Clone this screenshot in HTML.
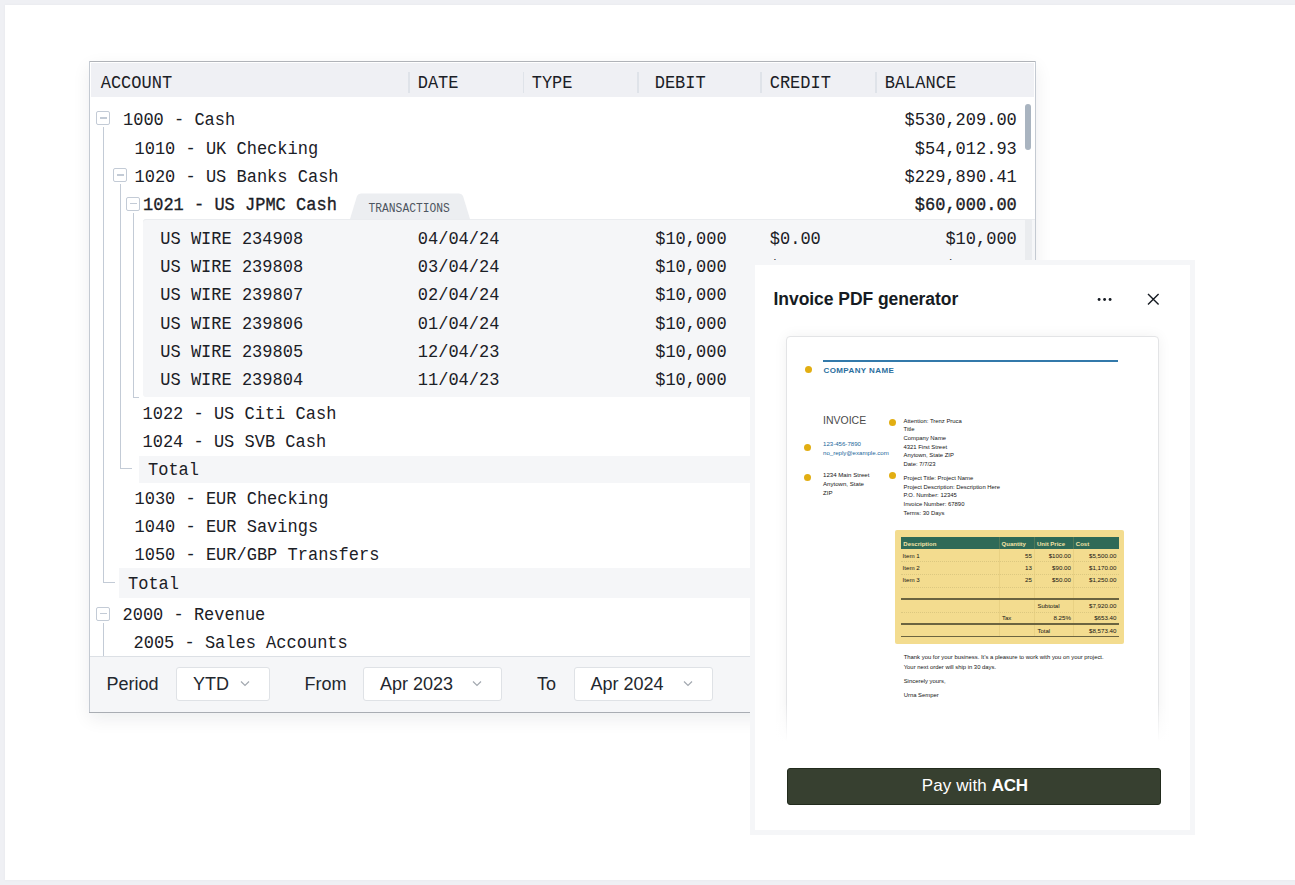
<!DOCTYPE html>
<html><head><meta charset="utf-8"><style>
html,body{margin:0;padding:0;width:1295px;height:885px;overflow:hidden;background:#eff0f4;position:relative}
.m{position:absolute;font-family:"Liberation Mono", monospace;line-height:20px;white-space:pre}
.s{position:absolute;font-family:"Liberation Sans", sans-serif;line-height:20px;white-space:pre}
.t{position:absolute;font-family:"Liberation Sans", sans-serif;line-height:10px;white-space:pre}
</style></head><body>
<div style="position:absolute;left:5px;top:5px;right:0;bottom:5px;background:#fff;box-shadow:0 0 3px rgba(0,0,0,0.04)"></div>
<div style="position:absolute;left:89px;top:61px;width:947px;height:652px;box-shadow:0 6px 18px rgba(20,30,40,0.075);background:#fff;border-radius:2px"></div>
<div style="position:absolute;left:91px;top:63px;width:943px;height:34px;background:#eff0f4"></div>
<div style="position:absolute;left:89px;top:61px;width:947px;height:1px;background:#b0b3b8"></div>
<div style="position:absolute;left:89px;top:61px;width:1px;height:652px;background:#c4cad2"></div>
<div style="position:absolute;left:1035px;top:61px;width:1px;height:652px;background:#c4cad2"></div>
<div style="position:absolute;left:408.2px;top:72px;width:1.6999999999999886px;height:21px;background:#dfe3e9"></div>
<div style="position:absolute;left:522.7px;top:72px;width:1.7000000000000455px;height:21px;background:#dfe3e9"></div>
<div style="position:absolute;left:637.3px;top:72px;width:1.7000000000000455px;height:21px;background:#dfe3e9"></div>
<div style="position:absolute;left:760.3px;top:72px;width:1.7000000000000455px;height:21px;background:#dfe3e9"></div>
<div style="position:absolute;left:875.2px;top:72px;width:1.7000000000000455px;height:21px;background:#dfe3e9"></div>
<div class="m" style="left:100.70px;top:74.08px;font-size:17px;color:#1b2026;transform:scaleY(1.08);transform-origin:0 14.52px;">ACCOUNT</div>
<div class="m" style="left:417.70px;top:74.08px;font-size:17px;color:#1b2026;transform:scaleY(1.08);transform-origin:0 14.52px;">DATE</div>
<div class="m" style="left:531.70px;top:74.08px;font-size:17px;color:#1b2026;transform:scaleY(1.08);transform-origin:0 14.52px;">TYPE</div>
<div class="m" style="left:654.70px;top:74.08px;font-size:17px;color:#1b2026;transform:scaleY(1.08);transform-origin:0 14.52px;">DEBIT</div>
<div class="m" style="left:769.70px;top:74.08px;font-size:17px;color:#1b2026;transform:scaleY(1.08);transform-origin:0 14.52px;">CREDIT</div>
<div class="m" style="left:884.70px;top:74.08px;font-size:17px;color:#1b2026;transform:scaleY(1.08);transform-origin:0 14.52px;">BALANCE</div>
<div style="position:absolute;left:143px;top:219px;width:892px;height:178px;background:#f5f6f8;border-radius:3px 0 0 3px;box-shadow:inset 0 1px 0 #eaecef"></div>
<svg style="position:absolute;left:348px;top:192px" width="124" height="28" viewBox="0 0 124 28"><path d="M2 27 L9 4 Q10 1.5 13 1.5 L111 1.5 Q114 1.5 115 4 L122 27 Z" fill="#eceef1"/></svg>
<div class="m" style="left:368.50px;top:198.59px;font-size:11.3px;color:#4d5560;transform:scaleY(1.06);transform-origin:0 13.01px;">TRANSACTIONS</div>
<div style="position:absolute;left:1025px;top:219px;width:7px;height:178px;background:#eaecef"></div>
<div style="position:absolute;left:1025px;top:104px;width:6px;height:46px;background:#a9b4c0;border-radius:3px"></div>
<div style="position:absolute;left:139px;top:456px;width:621px;height:27px;background:#f5f6f8"></div>
<div style="position:absolute;left:119px;top:568px;width:641px;height:29.5px;background:#f5f6f8"></div>
<div style="position:absolute;left:96px;top:111px;width:12px;height:12px;border:1px solid #c3cbd6;border-radius:2px;background:#fff"><div style="position:absolute;left:2.5px;top:5.3px;width:7px;height:1.3px;background:#c3cbd6"></div></div>
<div style="position:absolute;left:103px;top:127px;width:1px;height:455.5px;background:#c3cbd6"></div>
<div style="position:absolute;left:103px;top:582px;width:12px;height:1px;background:#c3cbd6"></div>
<div style="position:absolute;left:113px;top:168px;width:12px;height:12px;border:1px solid #c3cbd6;border-radius:2px;background:#fff"><div style="position:absolute;left:2.5px;top:5.3px;width:7px;height:1.3px;background:#c3cbd6"></div></div>
<div style="position:absolute;left:120px;top:184px;width:1px;height:285px;background:#c3cbd6"></div>
<div style="position:absolute;left:120px;top:468px;width:12px;height:1px;background:#c3cbd6"></div>
<div style="position:absolute;left:126px;top:196.8px;width:12px;height:12px;border:1px solid #c3cbd6;border-radius:2px;background:#fff"><div style="position:absolute;left:2.5px;top:5.3px;width:7px;height:1.3px;background:#c3cbd6"></div></div>
<div style="position:absolute;left:133px;top:213px;width:1px;height:184px;background:#c3cbd6"></div>
<div style="position:absolute;left:133px;top:396.5px;width:6px;height:1.0px;background:#c3cbd6"></div>
<div style="position:absolute;left:96px;top:606.5px;width:12px;height:12px;border:1px solid #c3cbd6;border-radius:2px;background:#fff"><div style="position:absolute;left:2.5px;top:5.3px;width:7px;height:1.3px;background:#c3cbd6"></div></div>
<div style="position:absolute;left:103px;top:623px;width:1px;height:33px;background:#c3cbd6"></div>
<div class="m" style="left:123.00px;top:111.18px;font-size:17px;color:#1b2026;transform:scaleY(1.08);transform-origin:0 14.52px;">1000 - Cash</div>
<div class="m" style="right:278.20px;top:111.18px;font-size:17px;color:#1b2026;transform:scaleY(1.08);transform-origin:0 14.52px;">$530,209.00</div>
<div class="m" style="left:134.50px;top:139.58px;font-size:17px;color:#1b2026;transform:scaleY(1.08);transform-origin:0 14.52px;">1010 - UK Checking</div>
<div class="m" style="right:278.20px;top:139.58px;font-size:17px;color:#1b2026;transform:scaleY(1.08);transform-origin:0 14.52px;">$54,012.93</div>
<div class="m" style="left:134.50px;top:167.78px;font-size:17px;color:#1b2026;transform:scaleY(1.08);transform-origin:0 14.52px;">1020 - US Banks Cash</div>
<div class="m" style="right:278.20px;top:167.78px;font-size:17px;color:#1b2026;transform:scaleY(1.08);transform-origin:0 14.52px;">$229,890.41</div>
<div class="m" style="left:143.00px;top:195.68px;font-size:17px;-webkit-text-stroke:0.3px #1b2026;color:#1b2026;transform:scaleY(1.08);transform-origin:0 14.52px;">1021 - US JPMC Cash</div>
<div class="m" style="right:278.20px;top:195.68px;font-size:17px;-webkit-text-stroke:0.3px #1b2026;color:#1b2026;transform:scaleY(1.08);transform-origin:0 14.52px;">$60,000.00</div>
<div class="m" style="left:142.50px;top:405.18px;font-size:17px;color:#1b2026;transform:scaleY(1.08);transform-origin:0 14.52px;">1022 - US Citi Cash</div>
<div class="m" style="left:142.50px;top:433.28px;font-size:17px;color:#1b2026;transform:scaleY(1.08);transform-origin:0 14.52px;">1024 - US SVB Cash</div>
<div class="m" style="left:148.00px;top:461.48px;font-size:17px;color:#1b2026;transform:scaleY(1.08);transform-origin:0 14.52px;">Total</div>
<div class="m" style="left:134.50px;top:489.68px;font-size:17px;color:#1b2026;transform:scaleY(1.08);transform-origin:0 14.52px;">1030 - EUR Checking</div>
<div class="m" style="left:134.50px;top:518.38px;font-size:17px;color:#1b2026;transform:scaleY(1.08);transform-origin:0 14.52px;">1040 - EUR Savings</div>
<div class="m" style="left:134.50px;top:546.28px;font-size:17px;color:#1b2026;transform:scaleY(1.08);transform-origin:0 14.52px;">1050 - EUR/GBP Transfers</div>
<div class="m" style="left:128.00px;top:574.68px;font-size:17px;color:#1b2026;transform:scaleY(1.08);transform-origin:0 14.52px;">Total</div>
<div class="m" style="left:122.50px;top:605.98px;font-size:17px;color:#1b2026;transform:scaleY(1.08);transform-origin:0 14.52px;">2000 - Revenue</div>
<div class="m" style="left:133.50px;top:634.08px;font-size:17px;color:#1b2026;transform:scaleY(1.08);transform-origin:0 14.52px;">2005 - Sales Accounts</div>
<div class="m" style="left:160.30px;top:229.78px;font-size:17px;color:#1b2026;transform:scaleY(1.08);transform-origin:0 14.52px;">US WIRE 234908</div>
<div class="m" style="left:417.80px;top:229.78px;font-size:17px;color:#1b2026;transform:scaleY(1.08);transform-origin:0 14.52px;">04/04/24</div>
<div class="m" style="left:655.20px;top:229.78px;font-size:17px;color:#1b2026;transform:scaleY(1.08);transform-origin:0 14.52px;">$10,000</div>
<div class="m" style="left:769.80px;top:229.78px;font-size:17px;color:#1b2026;transform:scaleY(1.08);transform-origin:0 14.52px;">$0.00</div>
<div class="m" style="right:278.20px;top:229.78px;font-size:17px;color:#1b2026;transform:scaleY(1.08);transform-origin:0 14.52px;">$10,000</div>
<div class="m" style="left:160.30px;top:258.08px;font-size:17px;color:#1b2026;transform:scaleY(1.08);transform-origin:0 14.52px;">US WIRE 239808</div>
<div class="m" style="left:417.80px;top:258.08px;font-size:17px;color:#1b2026;transform:scaleY(1.08);transform-origin:0 14.52px;">03/04/24</div>
<div class="m" style="left:655.20px;top:258.08px;font-size:17px;color:#1b2026;transform:scaleY(1.08);transform-origin:0 14.52px;">$10,000</div>
<div class="m" style="left:769.80px;top:258.08px;font-size:17px;color:#1b2026;transform:scaleY(1.08);transform-origin:0 14.52px;">$0.00</div>
<div class="m" style="right:278.20px;top:258.08px;font-size:17px;color:#1b2026;transform:scaleY(1.08);transform-origin:0 14.52px;">$10,000</div>
<div class="m" style="left:160.30px;top:286.38px;font-size:17px;color:#1b2026;transform:scaleY(1.08);transform-origin:0 14.52px;">US WIRE 239807</div>
<div class="m" style="left:417.80px;top:286.38px;font-size:17px;color:#1b2026;transform:scaleY(1.08);transform-origin:0 14.52px;">02/04/24</div>
<div class="m" style="left:655.20px;top:286.38px;font-size:17px;color:#1b2026;transform:scaleY(1.08);transform-origin:0 14.52px;">$10,000</div>
<div class="m" style="left:769.80px;top:286.38px;font-size:17px;color:#1b2026;transform:scaleY(1.08);transform-origin:0 14.52px;">$0.00</div>
<div class="m" style="right:278.20px;top:286.38px;font-size:17px;color:#1b2026;transform:scaleY(1.08);transform-origin:0 14.52px;">$10,000</div>
<div class="m" style="left:160.30px;top:314.68px;font-size:17px;color:#1b2026;transform:scaleY(1.08);transform-origin:0 14.52px;">US WIRE 239806</div>
<div class="m" style="left:417.80px;top:314.68px;font-size:17px;color:#1b2026;transform:scaleY(1.08);transform-origin:0 14.52px;">01/04/24</div>
<div class="m" style="left:655.20px;top:314.68px;font-size:17px;color:#1b2026;transform:scaleY(1.08);transform-origin:0 14.52px;">$10,000</div>
<div class="m" style="left:769.80px;top:314.68px;font-size:17px;color:#1b2026;transform:scaleY(1.08);transform-origin:0 14.52px;">$0.00</div>
<div class="m" style="right:278.20px;top:314.68px;font-size:17px;color:#1b2026;transform:scaleY(1.08);transform-origin:0 14.52px;">$10,000</div>
<div class="m" style="left:160.30px;top:342.98px;font-size:17px;color:#1b2026;transform:scaleY(1.08);transform-origin:0 14.52px;">US WIRE 239805</div>
<div class="m" style="left:417.80px;top:342.98px;font-size:17px;color:#1b2026;transform:scaleY(1.08);transform-origin:0 14.52px;">12/04/23</div>
<div class="m" style="left:655.20px;top:342.98px;font-size:17px;color:#1b2026;transform:scaleY(1.08);transform-origin:0 14.52px;">$10,000</div>
<div class="m" style="left:769.80px;top:342.98px;font-size:17px;color:#1b2026;transform:scaleY(1.08);transform-origin:0 14.52px;">$0.00</div>
<div class="m" style="right:278.20px;top:342.98px;font-size:17px;color:#1b2026;transform:scaleY(1.08);transform-origin:0 14.52px;">$10,000</div>
<div class="m" style="left:160.30px;top:371.28px;font-size:17px;color:#1b2026;transform:scaleY(1.08);transform-origin:0 14.52px;">US WIRE 239804</div>
<div class="m" style="left:417.80px;top:371.28px;font-size:17px;color:#1b2026;transform:scaleY(1.08);transform-origin:0 14.52px;">11/04/23</div>
<div class="m" style="left:655.20px;top:371.28px;font-size:17px;color:#1b2026;transform:scaleY(1.08);transform-origin:0 14.52px;">$10,000</div>
<div class="m" style="left:769.80px;top:371.28px;font-size:17px;color:#1b2026;transform:scaleY(1.08);transform-origin:0 14.52px;">$0.00</div>
<div class="m" style="right:278.20px;top:371.28px;font-size:17px;color:#1b2026;transform:scaleY(1.08);transform-origin:0 14.52px;">$10,000</div>
<div style="position:absolute;left:90px;top:656px;width:945px;height:1px;background:#dce0e5"></div>
<div style="position:absolute;left:90px;top:657px;width:945px;height:55px;background:#f5f6f8"></div>
<div style="position:absolute;left:89px;top:712px;width:947px;height:1px;background:#a9adb3"></div>
<div class="s" style="left:106.5px;top:673.56px;font-size:18px;color:#22272e;font-weight:normal;">Period</div>
<div style="position:absolute;left:176px;top:666.8px;width:92px;height:32.2px;background:#fff;border:1px solid #dfe2e6;border-radius:3px"></div>
<div class="s" style="left:193px;top:673.56px;font-size:18px;color:#22272e;font-weight:normal;">YTD</div>
<svg style="position:absolute;left:239.5px;top:680px" width="10" height="7" viewBox="0 0 10 7"><path d="M1 1.5 L5 5.5 L9 1.5" fill="none" stroke="#a3a9b0" stroke-width="1.2"/></svg>
<div class="s" style="left:304.5px;top:673.56px;font-size:18px;color:#22272e;font-weight:normal;">From</div>
<div style="position:absolute;left:363px;top:666.8px;width:137px;height:32.2px;background:#fff;border:1px solid #dfe2e6;border-radius:3px"></div>
<div class="s" style="left:380px;top:673.56px;font-size:18px;color:#22272e;font-weight:normal;">Apr 2023</div>
<svg style="position:absolute;left:471.5px;top:680px" width="10" height="7" viewBox="0 0 10 7"><path d="M1 1.5 L5 5.5 L9 1.5" fill="none" stroke="#a3a9b0" stroke-width="1.2"/></svg>
<div class="s" style="left:537px;top:673.56px;font-size:18px;color:#22272e;font-weight:normal;">To</div>
<div style="position:absolute;left:573.5px;top:666.8px;width:137.5px;height:32.2px;background:#fff;border:1px solid #dfe2e6;border-radius:3px"></div>
<div class="s" style="left:590.5px;top:673.56px;font-size:18px;color:#22272e;font-weight:normal;">Apr 2024</div>
<svg style="position:absolute;left:682.5px;top:680px" width="10" height="7" viewBox="0 0 10 7"><path d="M1 1.5 L5 5.5 L9 1.5" fill="none" stroke="#a3a9b0" stroke-width="1.2"/></svg>
<div style="position:absolute;left:750px;top:260px;width:435px;height:565px;border:5px solid #f5f6f8;background:#fff"></div>
<div class="s" style="left:773.5px;top:288.93px;font-size:17.5px;color:#161b22;font-weight:bold;letter-spacing:-0.05px">Invoice PDF generator</div>
<svg style="position:absolute;left:1090px;top:290px" width="30" height="20" viewBox="0 0 30 20"><circle cx="9.1" cy="9.5" r="1.45" fill="#161b22"/><circle cx="14.6" cy="9.5" r="1.45" fill="#161b22"/><circle cx="20.1" cy="9.5" r="1.45" fill="#161b22"/></svg>
<svg style="position:absolute;left:1147px;top:293px" width="13" height="13" viewBox="0 0 13 13"><path d="M1 1 L11.6 11.6 M11.6 1 L1 11.6" stroke="#161b22" stroke-width="1.4"/></svg>
<div style="position:absolute;left:760px;top:315px;width:425px;height:430px;overflow:hidden">
<div style="position:absolute;left:26px;top:21px;width:371px;height:464px;border:1px solid #e3e4e6;border-radius:4px;background:#fff;box-shadow:0 0 14px rgba(0,0,0,0.06)"></div>
</div>
<div style="position:absolute;left:823px;top:360.2px;width:295px;height:1.6999999999999886px;background:#3279aa"></div>
<div style="position:absolute;left:804.50px;top:365.50px;width:7px;height:7px;border-radius:50%;background:#e2ae12"></div>
<div class="t" style="left:823.5px;top:366.00px;font-size:8px;color:#2a6e9e;font-weight:bold;letter-spacing:0.4px">COMPANY NAME</div>
<div class="t" style="left:823px;top:414.80px;font-size:10.5px;color:#4a4a4a;font-weight:normal;top:411.5px;line-height:14px;transform:scaleY(1.1);transform-origin:0 0">INVOICE</div>
<div style="position:absolute;left:888.80px;top:419.00px;width:7px;height:7px;border-radius:50%;background:#e2ae12"></div>
<div class="t" style="left:903.5px;top:415.50px;font-size:5.9px;color:#151515;font-weight:normal;">Attention: Trenz Pruca</div>
<div class="t" style="left:903.5px;top:424.17px;font-size:5.9px;color:#151515;font-weight:normal;">Title</div>
<div class="t" style="left:903.5px;top:432.84px;font-size:5.9px;color:#151515;font-weight:normal;">Company Name</div>
<div class="t" style="left:903.5px;top:441.51px;font-size:5.9px;color:#151515;font-weight:normal;">4321 First Street</div>
<div class="t" style="left:903.5px;top:450.18px;font-size:5.9px;color:#151515;font-weight:normal;">Anytown, State ZIP</div>
<div class="t" style="left:903.5px;top:458.85px;font-size:5.9px;color:#151515;font-weight:normal;">Date: 7/7/23</div>
<div style="position:absolute;left:804.20px;top:444.00px;width:7px;height:7px;border-radius:50%;background:#e2ae12"></div>
<div class="t" style="left:823px;top:438.60px;font-size:6.1px;color:#23669a;font-weight:normal;">123-456-7890</div>
<div class="t" style="left:823px;top:447.60px;font-size:6.1px;color:#23669a;font-weight:normal;">no_reply@example.com</div>
<div style="position:absolute;left:804.20px;top:474.10px;width:7px;height:7px;border-radius:50%;background:#e2ae12"></div>
<div class="t" style="left:823px;top:470.20px;font-size:6.1px;color:#151515;font-weight:normal;">1234 Main Street</div>
<div class="t" style="left:823px;top:478.90px;font-size:6.1px;color:#151515;font-weight:normal;">Anytown, State</div>
<div class="t" style="left:823px;top:487.60px;font-size:6.1px;color:#151515;font-weight:normal;">ZIP</div>
<div style="position:absolute;left:888.80px;top:472.00px;width:7px;height:7px;border-radius:50%;background:#e2ae12"></div>
<div class="t" style="left:903.5px;top:473.10px;font-size:5.9px;color:#151515;font-weight:normal;">Project Title: Project Name</div>
<div class="t" style="left:903.5px;top:481.77px;font-size:5.9px;color:#151515;font-weight:normal;">Project Description: Description Here</div>
<div class="t" style="left:903.5px;top:490.44px;font-size:5.9px;color:#151515;font-weight:normal;">P.O. Number: 12345</div>
<div class="t" style="left:903.5px;top:499.11px;font-size:5.9px;color:#151515;font-weight:normal;">Invoice Number: 67890</div>
<div class="t" style="left:903.5px;top:507.78px;font-size:5.9px;color:#151515;font-weight:normal;">Terms: 30 Days</div>
<div style="position:absolute;left:895px;top:530px;width:229px;height:114px;background:#f3dc8f;border-radius:2px"></div>
<div style="position:absolute;left:901px;top:537px;width:217.5px;height:12.200000000000045px;background:#2f6a57"></div>
<div class="t" style="left:903.3px;top:538.50px;font-size:6px;color:#f3e3a6;font-weight:bold;">Description</div>
<div class="t" style="left:1001.6px;top:538.50px;font-size:6px;color:#f3e3a6;font-weight:bold;">Quantity</div>
<div class="t" style="left:1037px;top:538.50px;font-size:6px;color:#f3e3a6;font-weight:bold;">Unit Price</div>
<div class="t" style="left:1075.8px;top:538.50px;font-size:6px;color:#f3e3a6;font-weight:bold;">Cost</div>
<div style="position:absolute;left:999.2px;top:537px;width:0.7999999999999545px;height:99px;background:rgba(200,175,90,0.22)"></div>
<div style="position:absolute;left:1034.4px;top:537px;width:0.7999999999999545px;height:99px;background:rgba(200,175,90,0.22)"></div>
<div style="position:absolute;left:1073.3px;top:537px;width:0.7999999999999545px;height:99px;background:rgba(200,175,90,0.22)"></div>
<div style="position:absolute;left:901px;top:561.4px;width:217.5px;height:0.6000000000000227px;border-top:1px dotted #dcc880;height:0"></div>
<div style="position:absolute;left:901px;top:573.8px;width:217.5px;height:0.6000000000000227px;border-top:1px dotted #dcc880;height:0"></div>
<div style="position:absolute;left:901px;top:586.7px;width:217.5px;height:0.6000000000000227px;border-top:1px dotted #dcc880;height:0"></div>
<div style="position:absolute;left:901px;top:611.6px;width:217.5px;height:0.6000000000000227px;border-top:1px dotted #dcc880;height:0"></div>
<div style="position:absolute;left:901px;top:598.2px;width:217.5px;height:1.5px;background:#6b6440"></div>
<div style="position:absolute;left:901px;top:623.3px;width:217.5px;height:1.5px;background:#6b6440"></div>
<div style="position:absolute;left:901px;top:635.8px;width:217.5px;height:1.5px;background:#6b6440"></div>
<div class="t" style="left:902.5px;top:550.50px;font-size:6.2px;color:#151515;font-weight:normal;">Item 1</div>
<div class="t" style="right:263px;top:550.50px;font-size:6.2px;color:#151515">55</div>
<div class="t" style="right:224px;top:550.50px;font-size:6.2px;color:#151515">$100.00</div>
<div class="t" style="right:178.5px;top:550.50px;font-size:6.2px;color:#151515">$5,500.00</div>
<div class="t" style="left:902.5px;top:563.20px;font-size:6.2px;color:#151515;font-weight:normal;">Item 2</div>
<div class="t" style="right:263px;top:563.20px;font-size:6.2px;color:#151515">13</div>
<div class="t" style="right:224px;top:563.20px;font-size:6.2px;color:#151515">$90.00</div>
<div class="t" style="right:178.5px;top:563.20px;font-size:6.2px;color:#151515">$1,170.00</div>
<div class="t" style="left:902.5px;top:575.40px;font-size:6.2px;color:#151515;font-weight:normal;">Item 3</div>
<div class="t" style="right:263px;top:575.40px;font-size:6.2px;color:#151515">25</div>
<div class="t" style="right:224px;top:575.40px;font-size:6.2px;color:#151515">$50.00</div>
<div class="t" style="right:178.5px;top:575.40px;font-size:6.2px;color:#151515">$1,250.00</div>
<div class="t" style="left:1037.5px;top:600.90px;font-size:6px;color:#151515;font-weight:normal;">Subtotal</div>
<div class="t" style="right:178.5px;top:600.90px;font-size:6.2px;color:#151515">$7,920.00</div>
<div class="t" style="left:1002px;top:612.90px;font-size:6px;color:#151515;font-weight:normal;">Tax</div>
<div class="t" style="right:224px;top:612.90px;font-size:6.2px;color:#151515">8.25%</div>
<div class="t" style="right:178.5px;top:612.90px;font-size:6.2px;color:#151515">$653.40</div>
<div class="t" style="left:1037.5px;top:625.60px;font-size:6px;color:#151515;font-weight:normal;">Total</div>
<div class="t" style="right:178.5px;top:625.60px;font-size:6.2px;color:#151515">$8,573.40</div>
<div class="t" style="left:903.7px;top:652.20px;font-size:5.9px;color:#151515;font-weight:normal;">Thank you for your business. It’s a pleasure to work with you on your project.</div>
<div class="t" style="left:903.7px;top:661.50px;font-size:5.9px;color:#151515;font-weight:normal;">Your next order will ship in 30 days.</div>
<div class="t" style="left:903.7px;top:676.00px;font-size:5.9px;color:#151515;font-weight:normal;">Sincerely yours,</div>
<div class="t" style="left:903.7px;top:689.50px;font-size:5.9px;color:#151515;font-weight:normal;">Urna Semper</div>
<div style="position:absolute;left:765px;top:702px;width:415px;height:44px;background:linear-gradient(rgba(255,255,255,0),#fff 90%)"></div>
<div style="position:absolute;left:787px;top:768px;width:372px;height:35px;background:#374030;border:1px solid #222b1d;border-radius:3px"></div>
<div class="s" style="left:921.8px;top:775.61px;font-size:17px;color:#fff;font-weight:normal;letter-spacing:0.1px">Pay with <b style="letter-spacing:-0.3px">ACH</b></div>
</body></html>
